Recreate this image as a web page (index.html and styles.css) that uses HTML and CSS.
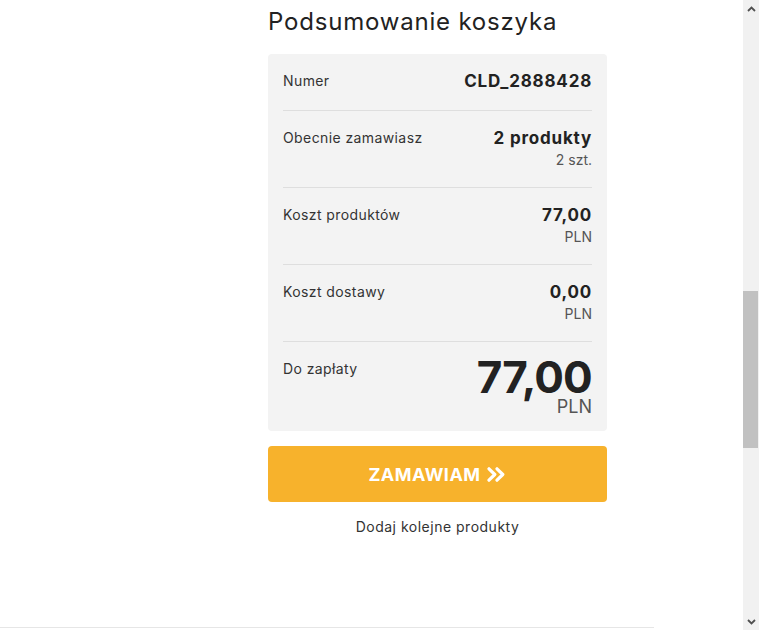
FILE: index.html
```html
<!DOCTYPE html>
<html lang="pl">
<head>
    <meta charset="UTF-8">
    <meta name="viewport" content="width=device-width, initial-scale=1.0">
    <title>Podsumowanie koszyka</title>
    <link rel="stylesheet" href="styles.css">
</head>
<body>
    <div class="page">
        <main class="main">
            <section class="summary">
                <h2 class="summary-title">Podsumowanie koszyka</h2>

                <div class="summary-card">
                    <div class="summary-row summary-row--single">
                        <span class="row-label">Numer</span>
                        <div class="row-value">
                            <span class="value-main">CLD_2888428</span>
                        </div>
                    </div>
                    <div class="summary-row">
                        <span class="row-label">Obecnie zamawiasz</span>
                        <div class="row-value">
                            <span class="value-main">2 produkty</span>
                            <span class="value-sub">2 szt.</span>
                        </div>
                    </div>
                    <div class="summary-row">
                        <span class="row-label">Koszt produktów</span>
                        <div class="row-value">
                            <span class="value-main">77,00</span>
                            <span class="value-sub">PLN</span>
                        </div>
                    </div>
                    <div class="summary-row">
                        <span class="row-label">Koszt dostawy</span>
                        <div class="row-value">
                            <span class="value-main">0,00</span>
                            <span class="value-sub">PLN</span>
                        </div>
                    </div>
                    <div class="summary-row summary-row--total">
                        <span class="row-label">Do zapłaty</span>
                        <div class="row-value">
                            <span class="value-main">77,00</span>
                            <span class="value-sub">PLN</span>
                        </div>
                    </div>
                </div>

                <button class="order-btn" type="button">
                    ZAMAWIAM
                    <svg class="order-icon" width="20" height="15" viewBox="0 0 20 15" aria-hidden="true">
                        <path d="M2 1.8 L7.8 7.5 L2 13.2 M10 1.8 L15.8 7.5 L10 13.2" fill="none" stroke="#fff" stroke-width="3.2" stroke-linecap="round" stroke-linejoin="round"/>
                    </svg>
                </button>
                <a class="add-more" href="#">Dodaj kolejne produkty</a>
            </section>
        </main>
        <footer class="footer"></footer>
    </div>

    <div class="scrollbar">
        <div class="scroll-arrow">
            <svg width="9" height="6" viewBox="0 0 9 6"><path d="M1 5 L4.5 1.5 L8 5" fill="none" stroke="#505050" stroke-width="1.8"/></svg>
        </div>
        <div class="scroll-track">
            <div class="scroll-thumb"></div>
        </div>
        <div class="scroll-arrow">
            <svg width="9" height="6" viewBox="0 0 9 6"><path d="M1 1 L4.5 4.5 L8 1" fill="none" stroke="#505050" stroke-width="1.8"/></svg>
        </div>
    </div>
</body>
</html>
```

FILE: styles.css
```css
:root {
    --text: #222222;
    --label: #333333;
    --muted: #555555;
    --card: #f3f3f3;
    --line: #dedede;
    --accent: #f7b22c;
    --radius: 4px;
}

* {
    box-sizing: border-box;
}

body {
    margin: 0;
    height: 630px;
    overflow: hidden;
    display: flex;
    font-family: 'Inter', 'Noto Sans', sans-serif;
    color: var(--text);
    background: white;
}

.page {
    flex: 1;
    display: flex;
    flex-direction: column;
}

.main {
    flex: 1;
}

.summary {
    width: 339px;
    margin-left: 268px;
    display: flex;
    flex-direction: column;
}

.summary-title {
    margin: 0 0 17px;
    padding-top: 7px;
    font-size: 24px;
    line-height: 30px;
    font-weight: 400;
    letter-spacing: 0.8px;
    color: var(--text);
}

.summary-card {
    background: var(--card);
    border-radius: var(--radius);
    padding: 0 15px;
}

.summary-row {
    display: flex;
    justify-content: space-between;
    align-items: flex-start;
    padding: 16px 0 17px;
    border-bottom: 1px solid var(--line);
}

.summary-row:last-child {
    border-bottom: none;
}

.summary-row--single {
    padding-bottom: 18px;
}

.row-label {
    font-size: 14px;
    line-height: 22px;
    letter-spacing: 0.4px;
    color: var(--label);
}

.row-value {
    display: flex;
    flex-direction: column;
    align-items: flex-end;
}

.value-main {
    font-size: 17px;
    line-height: 22px;
    font-weight: 700;
    letter-spacing: 0.8px;
}

.value-sub {
    margin-top: 1px;
    font-size: 14px;
    line-height: 20px;
    color: var(--muted);
}

.summary-row--total {
    padding-bottom: 14px;
}

.summary-row--total .value-main {
    margin-top: 1px;
    font-size: 44px;
    line-height: 36px;
    letter-spacing: -0.8px;
}

.summary-row--total .value-sub {
    margin-top: 2px;
    font-size: 18px;
    line-height: 20px;
}

.order-btn {
    margin-top: 15px;
    height: 56px;
    border: none;
    border-radius: var(--radius);
    background: var(--accent);
    color: white;
    font-family: inherit;
    font-size: 18px;
    font-weight: 700;
    letter-spacing: 0.5px;
    display: flex;
    align-items: center;
    justify-content: center;
    gap: 6px;
    cursor: pointer;
}

.add-more {
    margin-top: 15px;
    text-align: center;
    font-size: 14px;
    line-height: 20px;
    letter-spacing: 0.5px;
    color: var(--label);
    text-decoration: none;
}

.footer {
    width: 654px;
    height: 3px;
    border-top: 1px solid #e6e6e6;
}

.scrollbar {
    width: 16px;
    display: flex;
    flex-direction: column;
    background: #f1f1f1;
}

.scroll-arrow {
    height: 17px;
    display: flex;
    align-items: center;
    justify-content: center;
}

.scroll-track {
    flex: 1;
    padding-top: 274px;
}

.scroll-thumb {
    height: 157px;
    margin: 0 1px 0 0;
    background: #c1c1c1;
}
```
